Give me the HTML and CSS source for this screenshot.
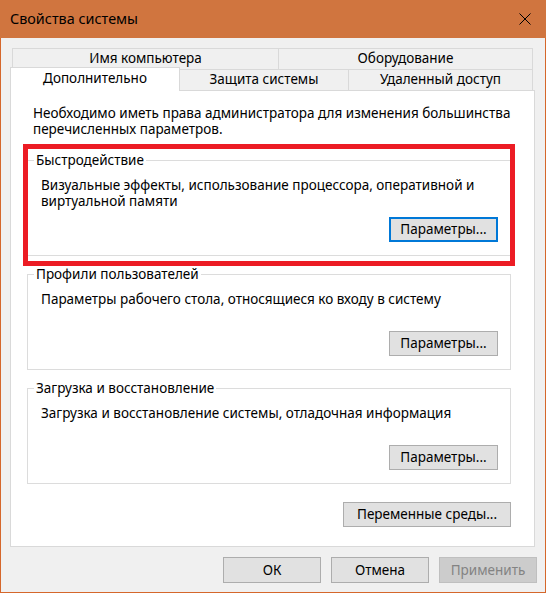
FILE: index.html
```html
<!DOCTYPE html>
<html lang="ru">
<head>
<meta charset="utf-8">
<title>Свойства системы</title>
<link rel="stylesheet" href="styles.css">
</head>
<body>
<div class="window">
  <header class="titlebar">
    <span class="title">Свойства системы</span>
    <span class="close">
      <svg width="12" height="12" viewBox="0 0 12 12"><path d="M0.5 0.5L11.5 11.5M11.5 0.5L0.5 11.5" stroke="#000" stroke-width="1" fill="none"/></svg>
    </span>
  </header>
  <div class="tabs">
    <div class="tabrow back">
      <div class="tab t1">Имя компьютера</div>
      <div class="tab t2">Оборудование</div>
    </div>
    <div class="tabrow front">
      <div class="tab selected">Дополнительно</div>
      <div class="tab t4">Защита системы</div>
      <div class="tab t5">Удаленный доступ</div>
    </div>
  </div>
  <div class="panel">
    <p class="info">Необходимо иметь права администратора для изменения большинства перечисленных параметров.</p>
    <div class="sections">
      <div class="highlight">
        <div class="group">
          <span class="legend">Быстродействие</span>
          <p class="desc">Визуальные эффекты, использование процессора, оперативной и виртуальной памяти</p>
          <button class="btn focus">Параметры...</button>
        </div>
      </div>
      <div class="group">
        <span class="legend">Профили пользователей</span>
        <p class="desc">Параметры рабочего стола, относящиеся ко входу в систему</p>
        <button class="btn">Параметры...</button>
      </div>
      <div class="group">
        <span class="legend">Загрузка и восстановление</span>
        <p class="desc">Загрузка и восстановление системы, отладочная информация</p>
        <button class="btn">Параметры...</button>
      </div>
      <button class="btn env">Переменные среды...</button>
    </div>
  </div>
  <div class="actions">
    <button class="btn action">ОК</button>
    <button class="btn action">Отмена</button>
    <button class="btn action" disabled>Применить</button>
  </div>
</div>
</body>
</html>
```
FILE: styles.css
```css
html, body {
  margin: 0;
  padding: 0;
  background: #f0f0f0;
}

.window {
  width: 546px;
  height: 593px;
  box-sizing: border-box;
  border: 1px solid #d5672b;
  background: #f0f0f0;
  display: flex;
  flex-direction: column;
  font-family: "Noto Sans", "Open Sans", sans-serif;
  font-size: 13.5px;
  color: #000;
}

.titlebar {
  flex: none;
  height: 38px;
  margin: -1px -1px 0;
  padding: 0 15px 0 10px;
  background: #d0753f;
  display: flex;
  align-items: center;
  justify-content: space-between;
}

.title {
  font-size: 14.4px;
  line-height: 20px;
}

.close {
  display: flex;
  width: 12px;
  height: 12px;
}

.tabs {
  margin: 10px 10px 0 9px;
}

.tabrow {
  display: flex;
}

.tabrow.back {
  margin: 0 2px;
}

.tab {
  box-sizing: border-box;
  height: 21px;
  border: 1px solid #d9d9d9;
  border-bottom: none;
  background: #f0f0f0;
  text-align: center;
  line-height: 19px;
  white-space: nowrap;
}

.tab + .tab {
  margin-left: -1px;
}

.t1 { width: 267px; }
.t2 { width: 255px; }

.tabrow.front {
  margin-top: -2px;
  height: 23px;
  align-items: flex-end;
}

.tab.selected {
  width: 170px;
  height: 24px;
  margin-bottom: -1px;
  line-height: 21px;
  background: #fff;
  position: relative;
  z-index: 1;
}

.t4 { width: 170px; }
.t5 { width: 185px; }

.panel {
  background: #fff;
  border: 1px solid #d9d9d9;
  margin: 0 10px 0 9px;
  padding: 14px 23px 19px 16px;
}

.info {
  margin: 0 0 23px;
  padding-left: 6px;
  line-height: 16px;
}

.sections {
  display: flex;
  flex-direction: column;
  gap: 18px;
}

.highlight {
  position: relative;
}

.highlight::after {
  content: "";
  position: absolute;
  top: -16px;
  left: -4px;
  right: -4px;
  bottom: -10px;
  border: 5px solid #ec1c24;
  pointer-events: none;
}

.group {
  box-sizing: border-box;
  height: 96px;
  border: 1px solid #dcdcdc;
  padding: 0 12px 13px 13px;
  display: flex;
  flex-direction: column;
  align-items: flex-start;
}

.legend {
  margin: -9px 0 0 -7px;
  padding: 0 2px;
  background: #fff;
  line-height: 16px;
}

.desc {
  margin: 9px 0 0;
  line-height: 16px;
}

.btn {
  box-sizing: border-box;
  width: 109px;
  height: 25px;
  padding: 0;
  border: 1px solid #adadad;
  background: #e1e1e1;
  font: inherit;
  color: #000;
  line-height: 21px;
}

.group .btn {
  margin-top: auto;
  align-self: flex-end;
}

.btn.focus {
  border: 2px solid #0078d7;
}

.btn.env {
  width: 168px;
  align-self: flex-end;
}

.actions {
  display: flex;
  justify-content: flex-end;
  gap: 10px;
  margin: 10px 8px 0 0;
}

.btn.action {
  width: 98px;
  height: 26px;
}

.btn[disabled] {
  background: #cccccc;
  border-color: #bfbfbf;
  color: #838383;
}
```
